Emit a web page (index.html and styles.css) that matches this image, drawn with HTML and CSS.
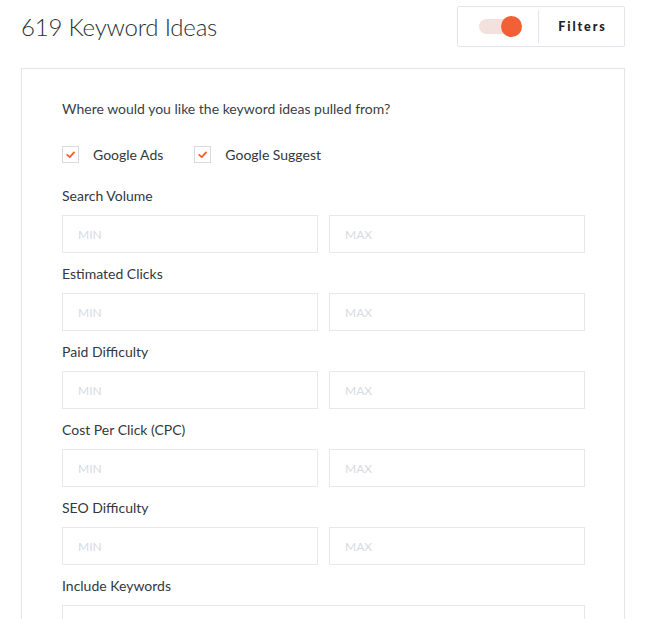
FILE: index.html
```html
<!DOCTYPE html>
<html>
<head>
<meta charset="utf-8">
<link rel="stylesheet" href="styles.css">
</head>
<body>
<div class="page">
  <header class="top">
    <h1 class="title">619 Keyword Ideas</h1>
    <div class="filters">
      <div class="toggle-cell"><span class="toggle"><span class="knob"></span></span></div>
      <div class="filters-label">Filters</div>
    </div>
  </header>
  <section class="card">
    <p class="question">Where would you like the keyword ideas pulled from?</p>
    <div class="sources">
      <label class="check"><span class="box"><svg viewBox="0 0 16 16" width="16" height="16"><path d="M4.5 8.4 L7.2 10.8 L11.8 5.8" fill="none" stroke="#f26135" stroke-width="2" stroke-linecap="round" stroke-linejoin="round"/></svg></span>Google Ads</label>
      <label class="check"><span class="box"><svg viewBox="0 0 16 16" width="16" height="16"><path d="M4.5 8.4 L7.2 10.8 L11.8 5.8" fill="none" stroke="#f26135" stroke-width="2" stroke-linecap="round" stroke-linejoin="round"/></svg></span>Google Suggest</label>
    </div>
    <div class="field">
      <div class="label">Search Volume</div>
      <div class="range"><div class="input">MIN</div><div class="input">MAX</div></div>
    </div>
    <div class="field">
      <div class="label">Estimated Clicks</div>
      <div class="range"><div class="input">MIN</div><div class="input">MAX</div></div>
    </div>
    <div class="field">
      <div class="label">Paid Difficulty</div>
      <div class="range"><div class="input">MIN</div><div class="input">MAX</div></div>
    </div>
    <div class="field">
      <div class="label">Cost Per Click (CPC)</div>
      <div class="range"><div class="input">MIN</div><div class="input">MAX</div></div>
    </div>
    <div class="field">
      <div class="label">SEO Difficulty</div>
      <div class="range"><div class="input">MIN</div><div class="input">MAX</div></div>
    </div>
    <div class="field">
      <div class="label">Include Keywords</div>
      <div class="input wide"></div>
    </div>
  </section>
</div>
</body>
</html>
```
FILE: styles.css
```css
html, body {
  margin: 0;
  padding: 0;
  background: #ffffff;
  overflow: hidden;
}
body {
  font-family: Lato, "Liberation Sans", sans-serif;
  color: #333840;
}
.page {
  width: 647px;
  height: 619px;
  overflow: hidden;
}
.top {
  display: flex;
  justify-content: space-between;
  align-items: center;
  padding: 6px 22px 0 21px;
  height: 41px;
}
.title {
  margin: 0;
  font-weight: 300;
  font-size: 24px;
  color: #2a2f36;
  letter-spacing: -0.2px;
}
.filters {
  display: flex;
  height: 39px;
  width: 166px;
  border: 1px solid #e3e5ea;
  border-radius: 2px;
}
.toggle-cell {
  width: 80px;
  display: flex;
  align-items: center;
  justify-content: center;
  border-right: 1px solid #e3e5ea;
  margin: 3px 0;
}
.toggle {
  position: relative;
  width: 42px;
  height: 15px;
  border-radius: 8px;
  background: #f3e1dd;
  display: block;
  margin-left: 4px;
}
.knob {
  position: absolute;
  right: -1px;
  top: -3px;
  width: 21px;
  height: 21px;
  border-radius: 50%;
  background: #f26135;
}
.filters-label {
  flex: 1;
  display: flex;
  align-items: center;
  justify-content: center;
  font-weight: 900;
  font-size: 12.5px;
  letter-spacing: 1.9px;
  color: #1d2127;
  padding-left: 2px;
}
.card {
  margin: 21px 0 0 21px;
  width: 523px;
  border: 1px solid #e3e5ea;
  border-bottom: none;
  padding: 30px 39px 40px 40px;
}
.question {
  margin: 0;
  font-size: 14px;
  line-height: 20px;
  color: #3a3f47;
}
.sources {
  display: flex;
  gap: 31px;
  margin-top: 25px;
  height: 20px;
  align-items: center;
}
.check {
  display: flex;
  align-items: center;
  font-size: 14px;
  color: #333840;
}
.box {
  width: 15px;
  height: 15px;
  border: 1px solid #d8dbe0;
  margin-right: 14px;
  display: flex;
  align-items: center;
  justify-content: center;
}
.box svg {
  width: 15px;
  height: 15px;
}
.field {
  margin-top: 22px;
}
.field + .field {
  margin-top: 11px;
}
.label {
  font-size: 14px;
  line-height: 20px;
  color: #333840;
}
.range {
  display: grid;
  grid-template-columns: 1fr 1fr;
  gap: 11px;
  margin-top: 9px;
}
.input {
  height: 36px;
  border: 1px solid #e6e8ec;
  display: flex;
  align-items: center;
  padding-left: 15px;
  font-size: 12px;
  color: #d6dbe2;
}
.input.wide {
  margin-top: 9px;
}
```
